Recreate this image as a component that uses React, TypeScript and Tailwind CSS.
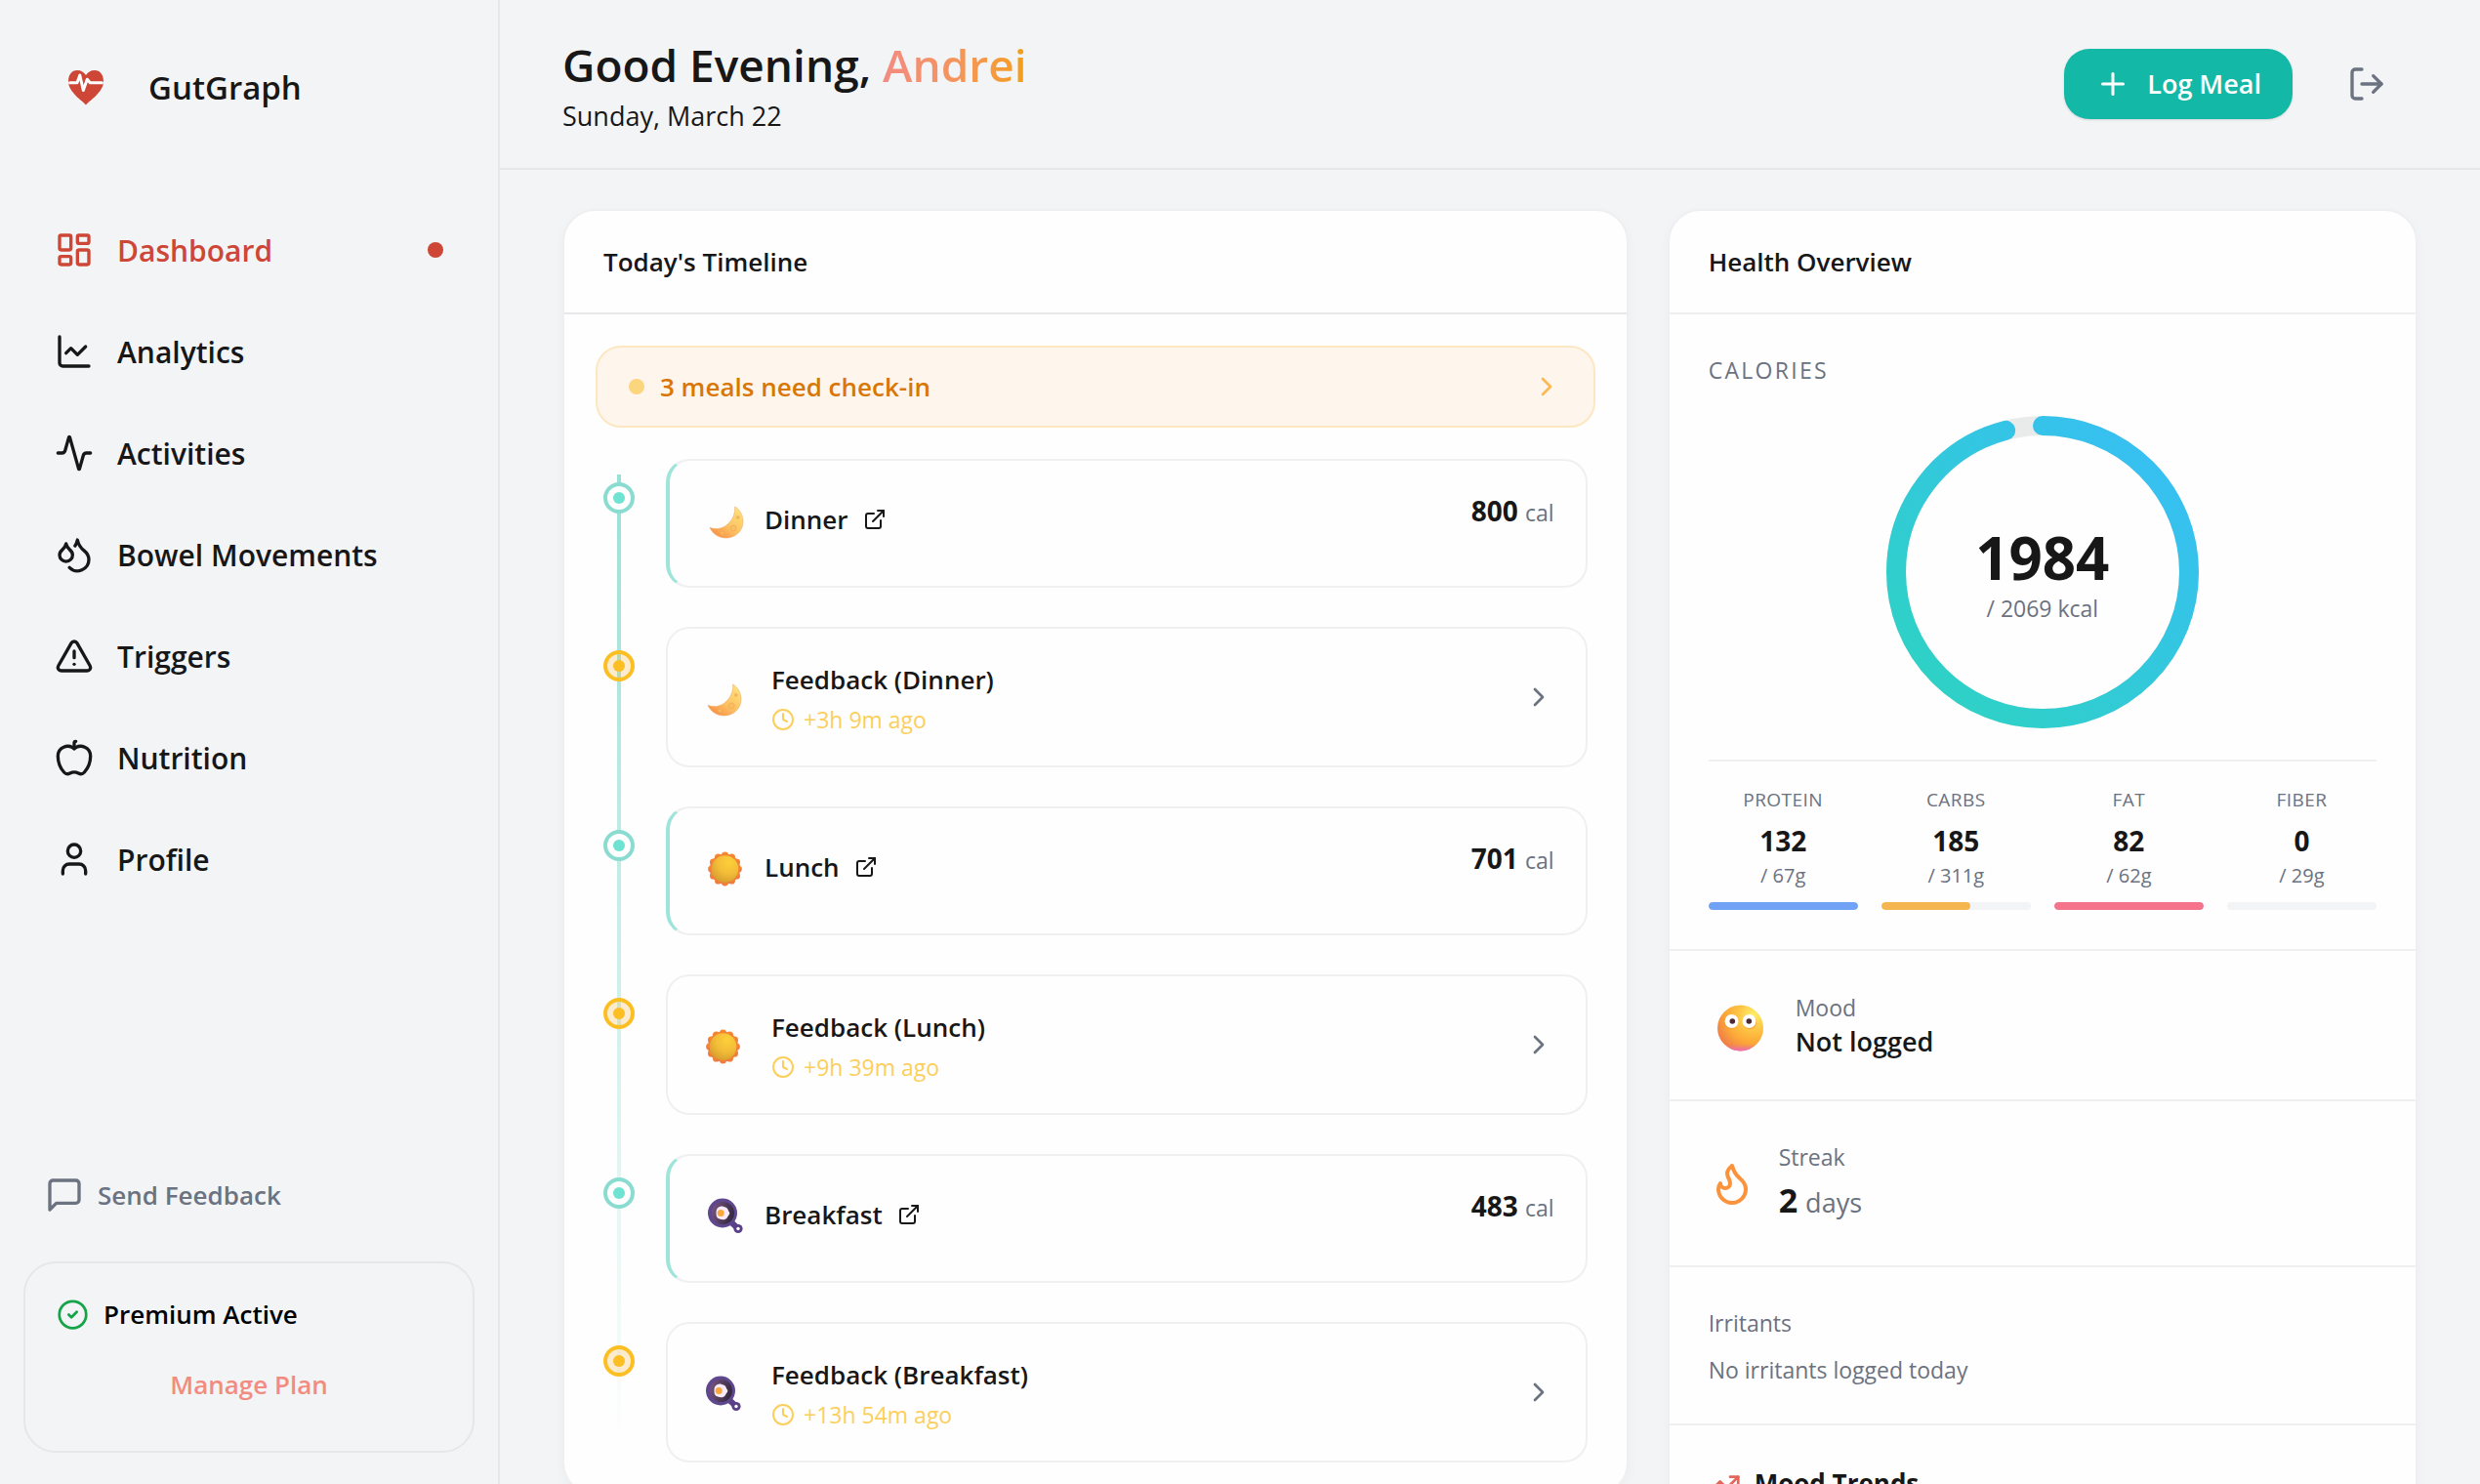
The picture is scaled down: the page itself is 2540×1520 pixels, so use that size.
import {
  Activity,
  Apple,
  ChartLine,
  ChevronRight,
  CircleCheck,
  Clock,
  Droplets,
  ExternalLink,
  Flame,
  LayoutDashboard,
  LogOut,
  Plus,
  TrendingUp,
  TriangleAlert,
  User,
  type LucideIcon,
} from 'lucide-react';

type Meal = 'Dinner' | 'Lunch' | 'Breakfast';

const navItems: { icon: LucideIcon; label: string; active?: boolean }[] = [
  { icon: LayoutDashboard, label: 'Dashboard', active: true },
  { icon: ChartLine, label: 'Analytics' },
  { icon: Activity, label: 'Activities' },
  { icon: Droplets, label: 'Bowel Movements' },
  { icon: TriangleAlert, label: 'Triggers' },
  { icon: Apple, label: 'Nutrition' },
  { icon: User, label: 'Profile' },
];

const meals: { name: Meal; calories: number; ago: string }[] = [
  { name: 'Dinner', calories: 800, ago: '+3h 9m ago' },
  { name: 'Lunch', calories: 701, ago: '+9h 39m ago' },
  { name: 'Breakfast', calories: 483, ago: '+13h 54m ago' },
];

const macros = [
  { label: 'Protein', value: 132, goal: 67, color: 'bg-[#70a3f6]' },
  { label: 'Carbs', value: 185, goal: 311, color: 'bg-[#f6b64f]' },
  { label: 'Fat', value: 82, goal: 62, color: 'bg-[#f5738b]' },
  { label: 'Fiber', value: 0, goal: 29, color: 'bg-[#34d399]' },
];

const calories = { value: 1984, goal: 2069 };

function HeartLogo() {
  return (
    <svg viewBox="0 0 36 36" className="size-9" aria-hidden="true">
      <path
        d="M18 35.5C15 31.5 0 22.5 0 11.5C0 4.5 3.5 0 9 0C13.5 0 16 2 18 5C20 2 22.5 0 27 0C32.5 0 36 4.5 36 11.5C36 22.5 21 31.5 18 35.5Z"
        fill="#cd4636"
      />
      <path
        d="M1.5 12.8H9L11.8 5L15.3 20.5L19.3 9.2L22.3 12.8H34.5"
        fill="none"
        stroke="#fff"
        strokeWidth="3"
        strokeLinecap="round"
        strokeLinejoin="round"
      />
    </svg>
  );
}

function MessageIcon() {
  return (
    <svg viewBox="0 0 24 24" fill="none" stroke="currentColor" strokeWidth="2" strokeLinecap="round" strokeLinejoin="round" className="size-10" aria-hidden="true">
      <path d="M21 15a2 2 0 0 1-2 2H7l-4 4V5a2 2 0 0 1 2-2h14a2 2 0 0 1 2 2z" />
    </svg>
  );
}

function MoonArt() {
  return (
    <svg viewBox="0 0 44 44" className="size-11 shrink-0" aria-hidden="true">
      <defs>
        <linearGradient id="moon" x1="0.9" y1="0.1" x2="0.2" y2="1">
          <stop offset="0" stopColor="#ffe07a" />
          <stop offset="0.55" stopColor="#fcc263" />
          <stop offset="1" stopColor="#f98d45" />
        </linearGradient>
      </defs>
      <path
        d="M30.7 9C36 12 39 18 39 24.5C39 34 31 41 21.7 41C14 41 8 37 5 30.3C10 32.5 16.5 32 21.7 28.2C28 23.5 31 17 30.7 9Z"
        fill="url(#moon)"
        stroke="#e8a45e"
        strokeWidth="0.5"
      />
      <g fill="#fabd60" stroke="#efac54" strokeWidth="0.8">
        <circle cx="29.2" cy="31" r="3" />
        <circle cx="17.5" cy="36" r="1.8" />
        <circle cx="33.8" cy="20" r="1.4" />
      </g>
    </svg>
  );
}

function SunArt() {
  return (
    <svg viewBox="0 0 44 44" className="size-11 shrink-0" aria-hidden="true">
      <defs>
        <linearGradient id="rays" x1="0.5" y1="0" x2="0.4" y2="1">
          <stop offset="0" stopColor="#f98a2c" />
          <stop offset="1" stopColor="#ec7a42" />
        </linearGradient>
        <radialGradient id="sun" cx="0.65" cy="0.25" r="0.85">
          <stop offset="0" stopColor="#fdd03a" />
          <stop offset="0.5" stopColor="#f3bd38" />
          <stop offset="1" stopColor="#d19a2e" />
        </radialGradient>
      </defs>
      <g fill="url(#rays)">
        <circle cx="20.5" cy="24" r="15.6" />
        {Array.from({ length: 12 }, (_, i) => (
          <circle
            key={i}
            cx={20.5 + 13.8 * Math.sin((i * Math.PI) / 6)}
            cy={24 - 13.8 * Math.cos((i * Math.PI) / 6)}
            r="3.6"
          />
        ))}
      </g>
      <circle cx="20.5" cy="24" r="13.8" fill="url(#sun)" />
    </svg>
  );
}

function PanArt() {
  return (
    <svg viewBox="0 0 44 44" className="size-11 shrink-0" aria-hidden="true">
      <defs>
        <linearGradient id="pan" x1="0" y1="0.3" x2="1" y2="0.6">
          <stop offset="0" stopColor="#74527c" />
          <stop offset="1" stopColor="#33283f" />
        </linearGradient>
      </defs>
      <path d="M27 30L34 36.5" stroke="#5a4088" strokeWidth="6" />
      <circle cx="34" cy="36.5" r="4.6" fill="#5a4088" />
      <circle cx="34" cy="36.5" r="1.7" fill="#fff" />
      <circle cx="18" cy="20.5" r="15" fill="#5f478e" />
      <circle cx="18.5" cy="20.5" r="11.5" fill="url(#pan)" />
      <path
        d="M14 14.5C17 12.5 19 14 21 14.5C24 15.5 23.5 18 25 19.5C26 22 23.5 23 23 25C21 28 17.5 27.5 15 26.5C11.5 25.5 11.5 22.5 11.5 20C11.5 17.5 12 15.5 14 14.5Z"
        fill="#f8eaf8"
      />
      <circle cx="16.2" cy="20.5" r="3.5" fill="#f9a83c" />
    </svg>
  );
}

function MoodArt() {
  return (
    <svg viewBox="0 0 64 64" className="size-16 shrink-0" aria-hidden="true">
      <defs>
        <radialGradient id="face" cx="0.78" cy="0.22" r="0.85">
          <stop offset="0" stopColor="#fff069" />
          <stop offset="0.35" stopColor="#fdc847" />
          <stop offset="0.7" stopColor="#fca938" />
          <stop offset="1" stopColor="#f08248" />
        </radialGradient>
        <linearGradient id="chin" x1="0.5" y1="0.86" x2="0.5" y2="1">
          <stop offset="0" stopColor="#f070b0" stopOpacity="0" />
          <stop offset="1" stopColor="#ec6cc0" />
        </linearGradient>
      </defs>
      <circle cx="32.5" cy="35" r="23.5" fill="url(#face)" />
      <circle cx="32.5" cy="35" r="23.5" fill="url(#chin)" />
      <circle cx="22.5" cy="29" r="7" fill="#f59a2c" />
      <circle cx="42" cy="29" r="7" fill="#f59a2c" />
      <circle cx="23.5" cy="28" r="7" fill="#fff" />
      <circle cx="41.5" cy="28" r="7" fill="#fff" />
      <circle cx="24.3" cy="28" r="2.8" fill="#4b2a36" />
      <circle cx="41.3" cy="28" r="2.8" fill="#4b2a36" />
    </svg>
  );
}

function MealArt({ meal }: { meal: Meal }) {
  if (meal === 'Dinner') return <MoonArt />;
  if (meal === 'Lunch') return <SunArt />;
  return <PanArt />;
}

function Sidebar() {
  return (
    <aside className="flex w-[512px] shrink-0 flex-col border-r-2 border-[#e5e7e9]">
      <div className="flex items-center gap-[46px] px-[70px] pt-[66px]">
        <HeartLogo />
        <span className="text-[33px] leading-[48px] font-semibold">GutGraph</span>
      </div>

      <nav className="mt-[102px] flex flex-col gap-6 px-6">
        {navItems.map(({ icon: Icon, label, active }) => (
          <a
            key={label}
            href="#"
            aria-current={active ? 'page' : undefined}
            className={`flex h-20 items-center gap-6 px-8 text-[30px] font-semibold ${active ? 'text-[#cd4636]' : ''}`}
          >
            <Icon className="size-10" />
            <span>{label}</span>
            {active && <span className="ml-auto size-4 rounded-full bg-[#cd4636]" />}
          </a>
        ))}
      </nav>

      <div className="mt-auto flex flex-col gap-[42px] px-6 pb-8">
        <button type="button" className="flex items-center gap-[14px] px-[22px] py-1 text-[26px] leading-[44px] font-semibold text-[#6b7280]">
          <MessageIcon />
          Send Feedback
        </button>
        <div className="flex flex-col rounded-[33px] border-2 border-[#e5e7e9] px-8 pt-8 pb-8">
          <div className="flex items-center gap-[15px] text-[26px] leading-[40px] font-semibold text-black">
            <CircleCheck className="size-[33px] text-[#16a34a]" />
            Premium Active
          </div>
          <button type="button" className="mt-4 py-3 text-[26px] leading-[48px] font-semibold text-[#f28c80]">
            Manage Plan
          </button>
        </div>
      </div>
    </aside>
  );
}

function Header() {
  return (
    <header className="flex items-center justify-between border-b-2 border-[#e5e7e9] px-16 py-[33px]">
      <div>
        <h1 className="text-[46px] leading-[66px] font-semibold">
          Good Evening,{' '}
          <span className="bg-linear-to-r from-[#f28b82] to-[#f59e0b] bg-clip-text text-transparent">Andrei</span>
        </h1>
        <p className="text-[27px] leading-[40px]">Sunday, March 22</p>
      </div>
      <div className="flex items-center gap-6">
        <button type="button" className="flex h-[72px] items-center gap-[17px] rounded-[26px] bg-[#14b8a6] px-8 text-[27px] font-semibold text-white shadow-sm">
          <Plus className="size-9" />
          Log Meal
        </button>
        <button type="button" aria-label="Log out" className="px-8 py-4 text-[#6b7280]">
          <LogOut className="size-10" />
        </button>
      </div>
    </header>
  );
}

function TimelineNode({ pending }: { pending?: boolean }) {
  return (
    <span
      className={`z-10 mt-6 flex size-8 shrink-0 items-center justify-center rounded-full border-4 ${
        pending ? 'border-[#fbbf24] bg-[#f59e0b]/20' : 'border-[#8adcd1] bg-white'
      }`}
    >
      <span className={`size-3 rounded-full ${pending ? 'bg-[#fbbf24]' : 'bg-[#6ee3d1]'}`} />
    </span>
  );
}

function MealCard({ name, calories }: { name: Meal; calories: number }) {
  return (
    <li className="flex items-start gap-8">
      <TimelineNode />
      <div className="flex min-h-[132px] flex-1 items-start justify-between rounded-3xl border-2 border-l-4 border-[#f0f0f1] border-l-[#9fe4da] py-[30px] pr-8 pl-9">
        <div className="flex h-[60px] items-center gap-[17px]">
          <MealArt meal={name} />
          <a href="#" className="flex items-center gap-[15px] text-[26px] leading-[42px] font-semibold">
            {name}
            <ExternalLink className="size-6" />
          </a>
        </div>
        <p className="text-[28px] leading-[42px] font-bold">
          {calories} <span className="text-[23px] font-normal text-[#6b7280]">cal</span>
        </p>
      </div>
    </li>
  );
}

function FeedbackCard({ name, ago }: { name: Meal; ago: string }) {
  return (
    <li className="flex items-start gap-8">
      <TimelineNode pending />
      <button type="button" className="flex flex-1 items-center rounded-3xl border-2 border-[#f0f0f1] py-[29px] pr-8 pl-9 text-left">
        <MealArt meal={name} />
        <span className="ml-[26px] flex flex-1 flex-col gap-[2px] pt-[2px]">
          <span className="text-[26px] leading-[42px] font-semibold">Feedback ({name})</span>
          <span className="flex items-center gap-[9px] text-[23px] leading-[36px] text-[#fccf5c]">
            <Clock className="size-6" />
            {ago}
          </span>
        </span>
        <ChevronRight className="size-8 text-[#6b7280]" />
      </button>
    </li>
  );
}

function Timeline() {
  return (
    <section className="col-span-7 self-start rounded-[34px] border-2 border-[#efeff1] bg-[#fefefe] shadow-[0_4px_12px_rgba(0,0,0,0.03)]">
      <h2 className="border-b-2 border-[#e7e8e9] px-10 py-8 text-[26px] leading-[40px] font-semibold">Today's Timeline</h2>
      <div className="p-8">
        <button type="button" className="flex h-[84px] w-full items-center gap-4 rounded-[26px] border-2 border-[#fde7c3] bg-[#fef6ec] px-8 text-[26px] font-semibold text-[#d97706]">
          <span className="size-4 rounded-full bg-[#fcd67d]" />
          3 meals need check-in
          <ChevronRight className="ml-auto size-8 text-[#fcb853]" />
        </button>

        <div className="relative mt-8 px-2">
          <div className="absolute inset-y-4 left-[22px] w-1 bg-linear-to-b from-[#99e0d6] to-transparent" />
          <ul className="flex flex-col gap-10">
            {meals.flatMap((meal) => [
              <MealCard key={meal.name} name={meal.name} calories={meal.calories} />,
              <FeedbackCard key={`${meal.name}-feedback`} name={meal.name} ago={meal.ago} />,
            ])}
          </ul>
        </div>
      </div>
    </section>
  );
}

function CalorieRing() {
  const length = 2 * Math.PI * 150;
  const filled = length * Math.min(calories.value / calories.goal, 1);

  return (
    <div className="relative mx-auto mt-[30px] size-80">
      <svg viewBox="0 0 320 320" className="size-full -rotate-90" aria-hidden="true">
        <defs>
          <linearGradient id="ring" x1="0" y1="0" x2="1" y2="1">
            <stop offset="0" stopColor="#2dd4bf" />
            <stop offset="1" stopColor="#38bdf8" />
          </linearGradient>
        </defs>
        <circle cx="160" cy="160" r="150" fill="none" stroke="#e9eaea" strokeWidth="20" />
        <circle
          cx="160"
          cy="160"
          r="150"
          fill="none"
          stroke="url(#ring)"
          strokeWidth="20"
          strokeLinecap="round"
          strokeDasharray={`${filled} ${length}`}
        />
      </svg>
      <div className="absolute inset-0 flex flex-col items-center justify-center pt-1">
        <span className="text-[60px] leading-[70px] font-bold">{calories.value}</span>
        <span className="text-[23px] leading-[34px] text-[#6b7280]">/ {calories.goal} kcal</span>
      </div>
    </div>
  );
}

function HealthOverview() {
  return (
    <section className="col-span-5 self-start rounded-[34px] border-2 border-[#efeff1] bg-[#fefefe] shadow-[0_4px_12px_rgba(0,0,0,0.03)]">
      <h2 className="border-b-2 border-[#efeff0] px-10 py-8 text-[26px] leading-[40px] font-semibold">Health Overview</h2>

      <div className="border-b-2 border-[#efeff0] p-10">
        <h3 className="text-[23px] leading-[34px] tracking-widest text-[#6b7280] uppercase">Calories</h3>
        <CalorieRing />
        <div className="mt-8 grid grid-cols-4 gap-6 border-t-2 border-[#efeff0] pt-6">
          {macros.map((macro) => (
            <div key={macro.label} className="text-center">
              <p className="text-[19px] leading-[30px] tracking-wide text-[#6b7280] uppercase">{macro.label}</p>
              <p className="mt-1 text-[28px] leading-[46px] font-bold">{macro.value}</p>
              <p className="text-[20px] leading-[26px] text-[#6b7280]">/ {macro.goal}g</p>
              <div className="mt-[14px] h-2 overflow-hidden rounded-full bg-gray-100">
                <div
                  className={`h-full rounded-full ${macro.color}`}
                  style={{ width: `${Math.min((macro.value / macro.goal) * 100, 100)}%` }}
                />
              </div>
            </div>
          ))}
        </div>
      </div>

      <div className="flex items-center gap-[25px] border-b-2 border-[#efeff0] px-10 py-[41px]">
        <MoodArt />
        <div>
          <p className="text-[23px] leading-[34px] text-[#6b7280]">Mood</p>
          <p className="text-[27px] leading-[36px] font-semibold">Not logged</p>
        </div>
      </div>

      <div className="flex items-center gap-6 border-b-2 border-[#efeff0] p-10">
        <Flame className="size-12 text-[#fb923c]" />
        <div>
          <p className="text-[23px] leading-[34px] text-[#6b7280]">Streak</p>
          <p className="text-[34px] leading-[54px] font-bold">
            2<span className="ml-2 text-[27px] leading-none font-normal text-[#6b7280]">days</span>
          </p>
        </div>
      </div>

      <div className="border-b-2 border-[#efeff0] px-10 pt-10 pb-[38px]">
        <p className="text-[23px] leading-[34px] text-[#6b7280]">Irritants</p>
        <p className="mt-[14px] text-[23px] leading-[34px] text-[#6b7280]">No irritants logged today</p>
      </div>

      <div className="p-10">
        <h3 className="flex items-center gap-[14px] text-[26px] leading-[38px] font-bold">
          <TrendingUp className="size-[33px] text-[#e4665a]" />
          Mood Trends
        </h3>
      </div>
    </section>
  );
}

export default function App() {
  return (
    <div className="flex h-screen overflow-hidden bg-[#f3f4f6] font-['Open_Sans','Noto_Sans',sans-serif] text-[#171717]">
      <Sidebar />
      <div className="flex min-w-0 flex-1 flex-col overflow-hidden">
        <Header />
        <main className="grid flex-1 grid-cols-12 gap-10 overflow-hidden px-16 pt-10">
          <Timeline />
          <HealthOverview />
        </main>
      </div>
    </div>
  );
}
